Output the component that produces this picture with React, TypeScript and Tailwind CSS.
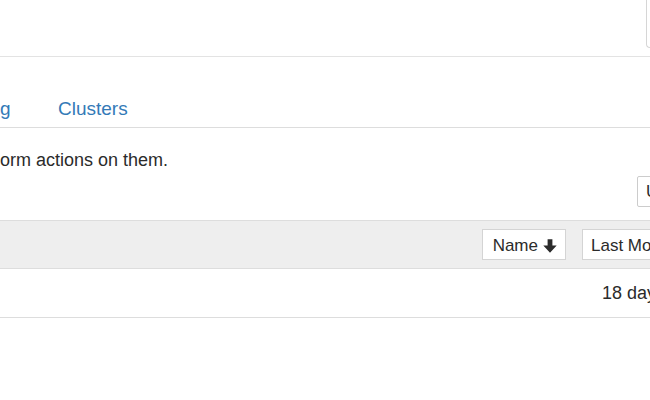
import React from "react";

function ArrowDown() {
  return (
    <svg viewBox="0 0 16 16" className="w-[16px] h-[16px] fill-current" aria-hidden>
      <path d="M5.6 1.2h4.8v6.3h4.3L8 14.8 1.3 7.5h4.3z" />
    </svg>
  );
}

export default function App() {
  return (
    <div className="w-[650px] h-[400px] overflow-hidden bg-white text-[#2b2b2b] font-['Liberation_Sans',Arial,sans-serif]">
      <div className="w-[760px]">
        {/* top bar */}
        <div className="flex h-[57px] border-b border-[#e3e3e3]">
          <div className="flex-1" />
          <div className="w-[114px] h-[48px] border-l border-b border-[#d6d6d6] rounded-bl" />
        </div>

        {/* tabs */}
        <div className="flex items-end h-[71px] border-b border-[#ddd] pb-[8px] text-[19px] leading-[20px] text-[#337ab7]">
          <span className="w-[58px]">g</span>
          <span>Clusters</span>
        </div>

        <p className="mt-[22px] text-[18px] leading-[20px]">orm actions on them.</p>

        <div className="flex mt-[6px]">
          <div className="flex-1" />
          <button className="w-[123px] h-[31px] border border-[#ccc] bg-white rounded-[2px] text-left pl-[8px] text-[17px]">
            Upload
          </button>
        </div>

        {/* list header */}
        <div className="flex items-center mt-[13px] h-[49px] bg-[#eee] border-t border-b border-[#ddd] gap-[16px] pr-[15px]">
          <div className="flex-1" />
          <button className="flex items-center gap-[4px] h-[31px] pt-[2px] pl-[10px] pr-[7px] bg-white border border-[#d4d4d4] text-[17px]">
            Name
            <ArrowDown />
          </button>
          <button className="w-[163px] h-[31px] pt-[2px] text-left pl-[8px] bg-white border border-[#d4d4d4] text-[17px]">
            Last Modified
          </button>
        </div>

        {/* row */}
        <div className="flex items-center h-[49px] border-b border-[#ddd]">
          <div className="flex-1" />
          <span className="w-[158px] text-[18px] leading-[20px] whitespace-nowrap">18 days ago</span>
        </div>
      </div>
    </div>
  );
}
